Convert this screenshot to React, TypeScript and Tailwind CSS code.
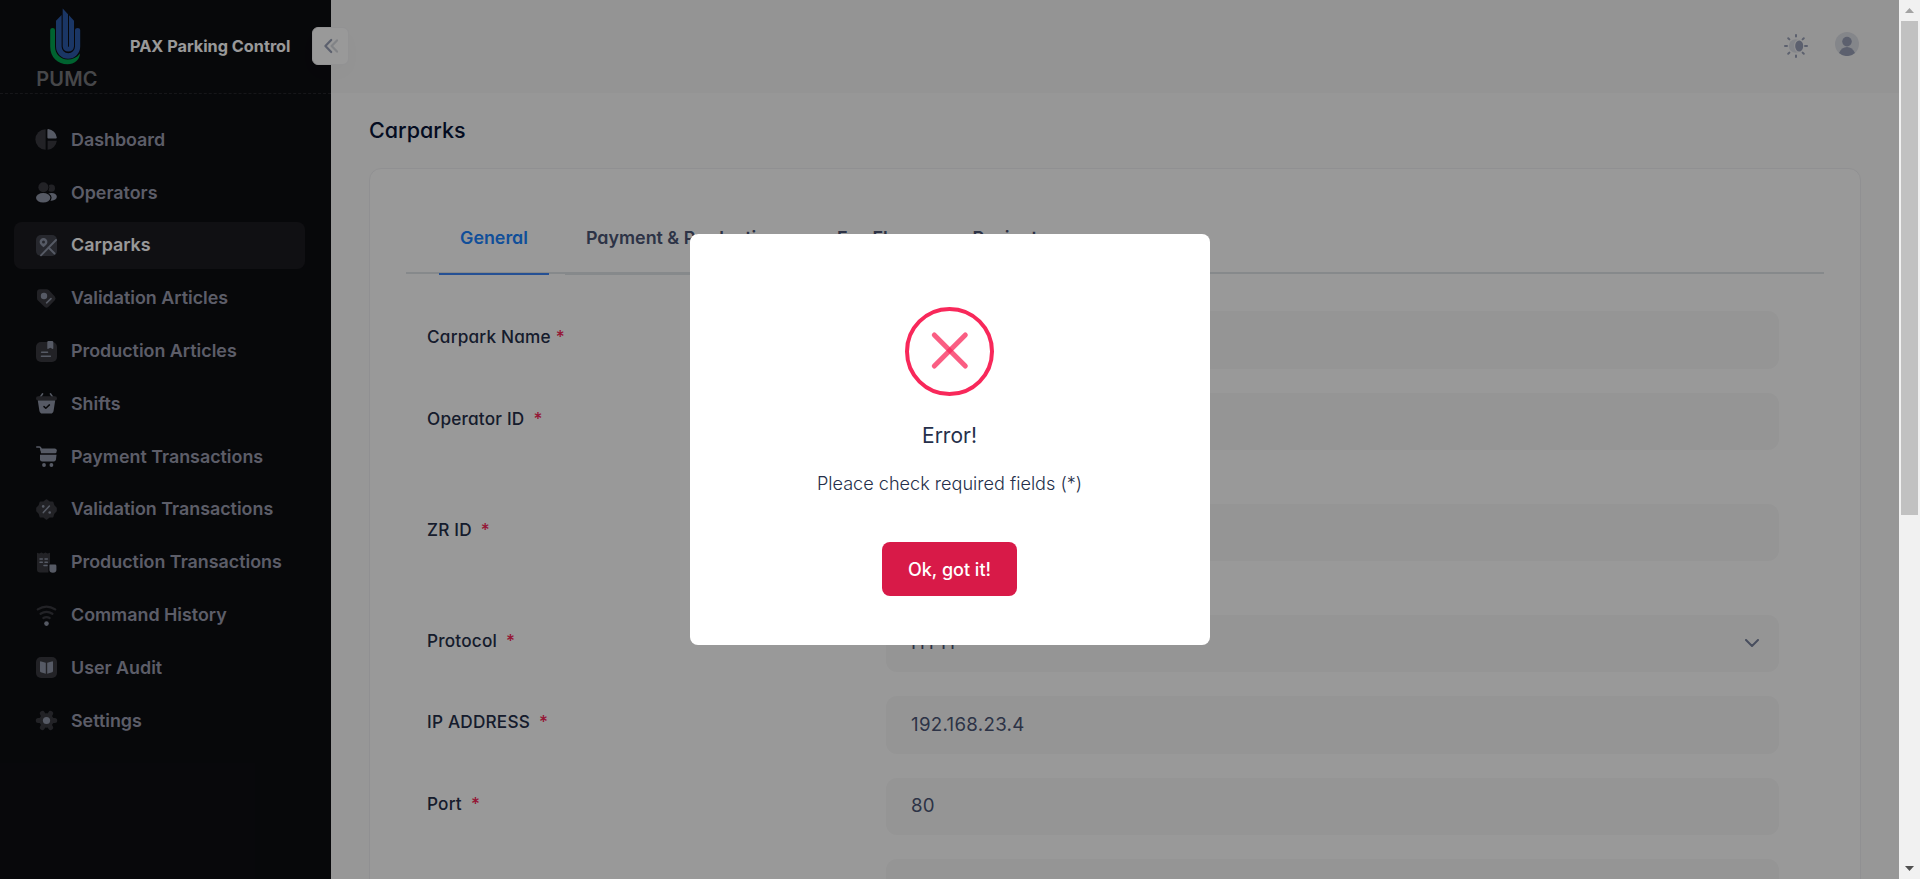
import React from "react";

type IconProps = { children: React.ReactNode };

function Icon({ children }: IconProps) {
  return (
    <svg viewBox="0 0 21 21" className="h-[21px] w-[21px] shrink-0 overflow-visible" fill="none">
      {children}
    </svg>
  );
}

const D = "#393a40";
const L = "#9097a8";

const icons: Record<string, React.ReactNode> = {
  Dashboard: (
    <Icon>
      <path d="M9.6 0.3V20.7A10.2 10.2 0 0 1 9.6 0.3Z" fill={D} />
      <path d="M11.6 11.8H20.8A10 10 0 0 1 11.6 20.7Z" fill={D} />
      <path d="M12.2 0.1A9.8 9.8 0 0 1 20.8 8.6Q20.8 9.6 19.8 9.6H12.4Q11.4 9.6 11.4 8.6V1Q11.4 0 12.2 0.1Z" fill={L} />
    </Icon>
  ),
  Operators: (
    <Icon>
      <circle cx="15.4" cy="6.2" r="3.6" fill={D} />
      <ellipse cx="15.6" cy="14.8" rx="5.2" ry="3.9" fill={L} />
      <circle cx="7.4" cy="5.2" r="5.9" fill="#0d0e12" />
      <ellipse cx="7.2" cy="15.8" rx="8.4" ry="5.6" fill="#0d0e12" />
      <circle cx="7.4" cy="5.2" r="5" fill={D} />
      <ellipse cx="7.2" cy="15.8" rx="7.2" ry="4.8" fill={L} />
    </Icon>
  ),
  Carparks: (
    <Icon>
      <rect width="21" height="21" rx="5" fill="#41444e" />
      <path d="M20 5L5 20.3M12.5 12.5L18.5 18.5" stroke={L} strokeWidth="1.9" strokeLinecap="round" />
      <path fillRule="evenodd" d="M7.5 3A3.9 3.9 0 0 1 11.4 7C11.4 9.2 9.6 10.6 7.5 12.2C5.4 10.6 3.6 9.2 3.6 7A3.9 3.9 0 0 1 7.5 3ZM7.5 5.5A1.5 1.5 0 1 0 7.5 8.5A1.5 1.5 0 1 0 7.5 5.5Z" fill={L} />
    </Icon>
  ),
  "Validation Articles": (
    <Icon>
      <path d="M1 4.2Q1 1.2 4 1.2H10.5Q12 1.2 13 2.2L18.8 8.4Q20.4 10.3 18.8 12.2L12.2 19Q10.5 20.6 8.8 19L2.2 12.8Q1 11.8 1 10.3Z" fill={D} />
      <circle cx="8" cy="8" r="3.2" fill={L} />
      <path d="M10.6 14.8L15 10.6" stroke={L} strokeWidth="1.6" strokeLinecap="round" />
    </Icon>
  ),
  "Production Articles": (
    <Icon>
      <rect y="1" width="21" height="20" rx="5" fill={D} />
      <path d="M11.3 1Q11.3 0 12.3 0H16Q17.3 0 17.3 1V7.2Q17.3 8.4 16.2 7.8L14.3 6.8L12.4 7.8Q11.3 8.4 11.3 7.2Z" fill={L} />
      <path d="M5.6 11.3H11.6M5.4 15.2H14.4" stroke={L} strokeWidth="1.4" strokeLinecap="round" />
    </Icon>
  ),
  Shifts: (
    <Icon>
      <path d="M6.6 0.8L4.2 4.2M14.4 0.8L16.8 4.2" stroke={L} strokeWidth="1.5" strokeLinecap="round" />
      <rect y="3.3" width="21" height="4.2" rx="2.1" fill={D} />
      <path d="M1.8 7.5H19.2L17.6 17.8Q17.1 20.6 14.6 20.6H6.4Q3.9 20.6 3.4 17.8Z" fill={L} />
      <path d="M8 13.6L9.8 15.3L13.4 11.9" stroke="#0d0e12" strokeWidth="1.5" strokeLinecap="round" strokeLinejoin="round" />
    </Icon>
  ),
  "Payment Transactions": (
    <Icon>
      <path d="M0.8 1H3.4Q4.4 1 4.8 2.2L5.4 4.4" stroke={L} strokeWidth="1.6" strokeLinecap="round" />
      <path d="M4.2 2.4H18.6Q20.8 2.4 20.8 4.4L20.4 6.6Q20.2 7.2 19.4 7.2H5Z" fill={L} />
      <path d="M4 8.8H20.5L19.9 13.8Q19.6 15.4 17.8 15.4H6.2Q4 15.4 4 13.2Z" fill={L} />
      <circle cx="8" cy="19" r="1.9" fill={L} />
      <circle cx="15.4" cy="19" r="1.9" fill={L} />
    </Icon>
  ),
  "Validation Transactions": (
    <Icon>
      <path d="M10.5 1.4L13 3.4L16.4 3.4L17.4 6.6L19.8 9.1V11.9L17.4 14.4L16.4 17.6H13L10.5 19.6L8 17.6H4.6L3.6 14.4L1.2 11.9V9.1L3.6 6.6L4.6 3.4H8Z" fill={D} stroke={D} strokeWidth="2" strokeLinejoin="round" />
      <path d="M7.3 13.6L13.4 7" stroke={L} strokeWidth="1.5" strokeLinecap="round" />
      <circle cx="7.2" cy="7.4" r="1.3" fill={L} />
      <circle cx="13.7" cy="13.5" r="1.3" fill={L} />
    </Icon>
  ),
  "Production Transactions": (
    <Icon>
      <path d="M1 0.8L3.2 1.6L5.4 0.6L7.4 1.6L9.4 0.6L11.6 1.6L14 0.8V20.6H4Q1 20.6 1 17.6Z" fill={D} />
      <path d="M4 7H6.3M9 7H11.3M4 10.3H6.3M9 10.3H11.3M8 13.6H11" stroke={L} strokeWidth="1.5" strokeLinecap="round" />
      <path d="M12.4 11.6H21V21H12.4Z" fill="#0d0e12" />
      <path d="M13.4 12.6H19Q20.4 12.6 20.4 14V17.8Q20.4 20.8 16.9 20.8Q13.4 20.8 13.4 17.8Z" fill={L} />
    </Icon>
  ),
  "Command History": (
    <Icon>
      <path d="M1.8 4.4Q10.5 -1.2 19.2 4.4M4.6 8.7Q10.5 5.2 16.4 8.7M7.4 13Q10.5 11.4 13.6 13" stroke={D} strokeWidth="2.3" strokeLinecap="round" />
      <circle cx="10.5" cy="18.6" r="2.3" fill={L} />
    </Icon>
  ),
  "User Audit": (
    <Icon>
      <rect width="21" height="21" rx="5" fill={D} />
      <path d="M9.8 16.8L4.8 15.2Q4 14.9 4 14V5.2Q4 4 5.2 4.4L9.8 5.8ZM11.2 16.8L16.2 15.2Q17 14.9 17 14V5.2Q17 4 15.8 4.4L11.2 5.8Z" fill={L} />
    </Icon>
  ),
  Settings: (
    <Icon>
      <circle cx="10.5" cy="10.5" r="7.2" fill={D} />
      <path d="M2.3 10.5H18.7M6.4 3.4L14.6 17.6M14.6 3.4L6.4 17.6" stroke={D} strokeWidth="5" strokeLinecap="round" />
      <circle cx="10.5" cy="10.5" r="3.6" fill={L} />
    </Icon>
  ),
};

const menu = Object.keys(icons);

function Logo() {
  return (
    <div className="flex w-[62px] flex-col items-center">
      <svg viewBox="0 0 32 58" className="h-[58px] w-8" fill="none">
        <path d="M0.2 22Q0.2 20 2.6 20T5 22V38.500C5 46 10.500 51.500 17.500 51.500C22.500 51.500 27 49.500 30 45.500C29.500 52 24.500 56.200 17.500 56.200C8 56.200 0.200 49.500 0.200 38.500Z" fill="#00a650" />
        <path d="M6 18.500V12.800L11.600 7V38.600A6.700 6.700 0 0 0 25 38.600V22Q25 20 27.600 20T30.200 22V38.600A12.100 12.100 0 0 1 6 38.600Z" fill="#2c5aa8" />
        <path d="M12.700 0.600L18 6.300V38.400A0.600 0.600 0 0 0 19 38.400V7.300L24 12.800V38.600A5.700 5.700 0 0 1 12.700 38.600Z" fill="#2c5aa8" />
      </svg>
      <div className="mt-[3px] pl-0.5 text-[20px] leading-[20px] font-semibold tracking-[0.2px] text-[#76777b]">PUMC</div>
    </div>
  );
}

function Sidebar() {
  return (
    <aside className="flex w-[331px] shrink-0 flex-col bg-[#0d0e12]">
      <div className="relative flex h-[94px] shrink-0 items-start border-b border-dashed border-[#25262b] pt-2 pl-[35px]">
        <Logo />
        <span className="mt-[26px] ml-[33px] text-[16.25px] leading-6 font-bold whitespace-nowrap text-white">PAX Parking Control</span>
        <div className="absolute top-[27px] left-[312px] flex h-[38px] w-[37px] items-center justify-center rounded-md border border-[#f3f3f5] bg-white shadow-[0_8px_18px_rgba(0,0,0,0.02)]">
          <svg viewBox="0 0 16 16" className="h-4 w-4" fill="none" strokeWidth="2.2" strokeLinecap="round" strokeLinejoin="round">
            <path d="M14 2.4L8.6 8L14 13.6" stroke="#d8dae0" />
            <path d="M8.2 2L2.4 8L8.2 14" stroke="#99a1b7" />
          </svg>
        </div>
      </div>
      <nav className="flex flex-col gap-[5px] pt-[22px] pl-3.5">
        {menu.map((name) => (
          <div
            key={name}
            className={
              name === "Carparks"
                ? "flex h-[47.8px] w-[291px] items-center gap-[14px] rounded-lg bg-[#1c1c20] pl-[22px] text-white"
                : "flex h-[47.8px] w-[291px] items-center gap-[14px] pl-[22px] text-[#9a9cae]"
            }
          >
            {icons[name]}
            <span className="text-[17.875px] leading-6 font-semibold whitespace-nowrap">{name}</span>
          </div>
        ))}
      </nav>
    </aside>
  );
}

function Header() {
  return (
    <header className="flex h-[93px] shrink-0 items-start justify-end bg-[#f7f7f7] pt-8 pr-10">
      <svg viewBox="0 0 24 24" className="mt-[2px] h-6 w-6" fill="none">
        <path d="M12 1V2.600M12 21.400V23M1 12H3M21 12H23M4.200 4.200L5.400 5.400M18.600 18.600L19.800 19.800M4.200 19.800L5.400 18.600M18.600 5.400L19.800 4.200" stroke="#99a1b7" strokeWidth="2" strokeLinecap="round" />
        <circle cx="11.6" cy="12" r="6.8" fill="#dddfe6" />
        <ellipse cx="14.600" cy="12" rx="4.500" ry="6.300" fill="#f2f2f4" />
        <ellipse cx="15.200" cy="12" rx="4" ry="5.600" fill="#99a1b7" />
      </svg>
      <svg viewBox="0 0 24 24" className="ml-[27px] h-6 w-6" fill="none">
        <circle cx="12" cy="12" r="12" fill="#dddfe6" />
        <circle cx="12" cy="9.600" r="4.800" fill="#99a1b7" />
        <path d="M4 21Q6.600 15 12 15T20 21A12 12 0 0 1 4 21Z" fill="#99a1b7" />
      </svg>
    </header>
  );
}

const tabs = ["General", "Payment & Production", "Fee Flow", "Reciept"];

const fields = [
  { label: "Carpark Name", value: "", row: "h-[81.5px]", gap: "ml-[5px]" },
  { label: "Operator ID", value: "", row: "h-[111px]", gap: "ml-[9px]" },
  { label: "ZR ID", value: "", row: "h-[111px]", gap: "ml-[9px]" },
  { label: "Protocol", value: "HTTP", row: "h-[81.5px]", gap: "ml-[9px]", select: true },
  { label: "IP ADDRESS", value: "192.168.23.4", row: "h-[81.5px]", gap: "ml-[9px]" },
  { label: "Port", value: "80", row: "h-[81.5px]", gap: "ml-[9px]" },
  { label: "", value: "", row: "h-[81.5px]", gap: "" },
];

function CarparkForm() {
  return (
    <section className="mx-[38px] mt-[22px] flex h-[900px] flex-col rounded-xl border border-[#f1f1f4] bg-white px-9 pt-[35px] [font-feature-settings:'cv11']">
      <div className="flex h-[70px] border-b-2 border-[#dfe4e8] pl-[33px]">
        {tabs.map((tab, i) => (
          <div
            key={tab}
            className={
              i === 0
                ? "mr-4 flex h-[71px] shrink-0 items-center border-b-2 border-[#3e85f7] px-[21px] pb-px text-[17.875px] font-semibold text-[#1b84ff]"
                : "flex h-[71px] shrink-0 items-center border-b-[3px] border-[#dfe4e8] pr-[38px] pl-[21px] text-[17.875px] font-semibold text-[#4b5675]"
            }
          >
            <span className="whitespace-nowrap">{tab}</span>
          </div>
        ))}
      </div>
      <div className="mt-[37px] flex flex-col pr-[45px] pl-[21px]">
        {fields.map((f) => (
          <div key={f.label} className={"flex shrink-0 items-start " + f.row}>
            <div className="flex w-[459px] shrink-0 pt-[14px] text-[17.2px] leading-6 font-medium tracking-[0.2px] text-[#252f4a]">
              {f.label}
              {f.label && <span className={"text-[#f8285a] " + f.gap}>*</span>}
            </div>
            <div className="flex h-[57.5px] flex-1 items-center justify-between rounded-[11px] bg-[#f9f9f9] pr-5 pl-[25px] text-[18.7px] tracking-[0.3px] text-[#4b5675]">
              <span>{f.value}</span>
              {f.select && (
                <svg viewBox="0 0 14 8" className="h-2 w-3.5" fill="none" stroke="#78829d" strokeWidth="2" strokeLinecap="round" strokeLinejoin="round">
                  <path d="M1 1L7 7L13 1" />
                </svg>
              )}
            </div>
          </div>
        ))}
      </div>
    </section>
  );
}

function Scrollbar() {
  return (
    <div className="flex w-[21px] shrink-0 flex-col items-center justify-between bg-[#f1f1f1]">
      <div className="flex flex-col items-center">
        <div className="flex h-[21px] items-center">
          <svg viewBox="0 0 9 5" className="h-[5px] w-[9px]" fill="#a3a3a3"><path d="M0 5L4.500 0L9 5Z" /></svg>
        </div>
        <div className="h-[494px] w-[17px] bg-[#c1c1c1]" />
      </div>
      <div className="flex h-[22px] items-center">
        <svg viewBox="0 0 9 5" className="h-[5px] w-[9px]" fill="#505050"><path d="M0 0L4.500 5L9 0Z" /></svg>
      </div>
    </div>
  );
}

function ErrorDialog() {
  return (
    <div className="absolute inset-y-0 left-0 flex w-[1899px] items-center justify-center bg-black/40">
      <div role="alertdialog" className="flex h-[411px] w-[520px] flex-col items-center rounded-lg bg-white pt-[73px]">
        <svg viewBox="0 0 89 89" className="h-[89px] w-[89px]" fill="none">
          <circle cx="44.500" cy="44.500" r="42.500" stroke="#f8285a" strokeWidth="4" />
          <g stroke="#f8285a" strokeWidth="5" strokeLinecap="round">
            <path d="M29.300 28L60.300 59" strokeOpacity="0.75" />
            <path d="M60.300 28L29.300 59" strokeOpacity="0.75" />
          </g>
        </svg>
        <h2 className="mt-[25px] text-[21px] leading-[30px] font-normal text-[#252f4a]">Error!</h2>
        <p className="mt-[19px] text-[18.1px] leading-[26px] font-light text-[#252f4a]">Pleace check required fields (*)</p>
        <button className="mt-[46px] h-[54px] w-[135px] rounded-lg bg-[#d81a48] text-[18px] font-medium text-white">Ok, got it!</button>
      </div>
    </div>
  );
}

export default function App() {
  return (
    <div className="relative flex h-[879px] w-[1920px] overflow-hidden bg-[#fcfcfc] font-['Inter',sans-serif]">
      <Sidebar />
      <main className="flex min-w-0 flex-1 flex-col overflow-hidden">
        <Header />
        <h1 className="mt-[21px] ml-[38px] text-[21.5px] leading-8 font-medium text-[#071437] [font-feature-settings:'cv11']">Carparks</h1>
        <CarparkForm />
      </main>
      <Scrollbar />
      <ErrorDialog />
    </div>
  );
}
